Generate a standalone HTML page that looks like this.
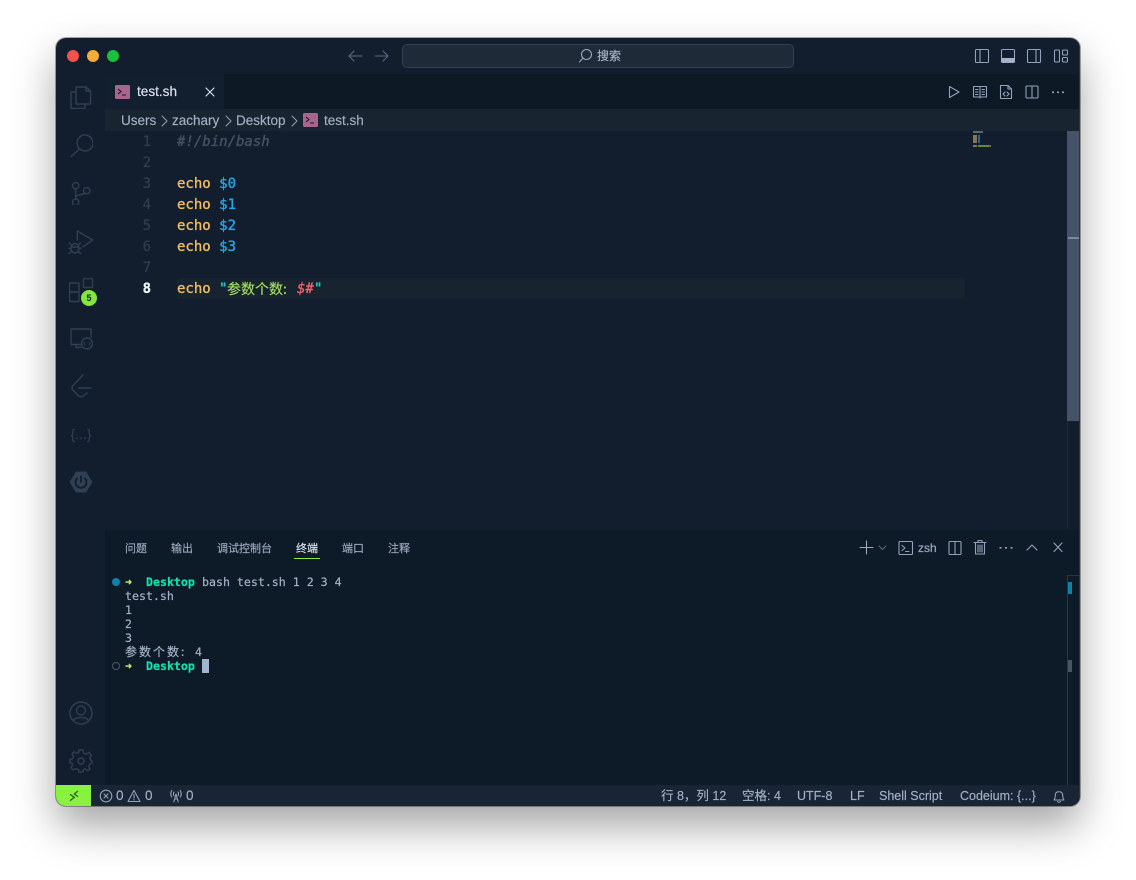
<!DOCTYPE html>
<html><head><meta charset="utf-8"><style>
html,body{margin:0;padding:0;width:1136px;height:880px;overflow:hidden;background:#fff}
*{box-sizing:border-box}
.abs,.t,svg.i{position:absolute}
#win{position:absolute;left:56px;top:38px;width:1024px;height:768px;border-radius:10px;box-shadow:0 20px 42px rgba(0,0,0,.36),0 0 0 1px rgba(90,90,90,.5);}
#clip{position:absolute;left:0;top:0;width:1136px;height:880px;clip-path:inset(38px 56px 74px 56px round 10px)}
.t{white-space:pre;line-height:1;font-family:"Liberation Sans","Noto Sans CJK SC",sans-serif;-webkit-text-stroke:.15px currentColor}
.m{font-family:"DejaVu Sans Mono","Noto Sans CJK SC",monospace}
.ln{font-size:14px;color:#2e3d4f;width:30px;text-align:right;left:121px;-webkit-text-stroke:.3px currentColor}
.code{font-size:14px;left:177px;-webkit-text-stroke:.35px currentColor}
.ui{font-size:13.5px;color:#a2b0c6}
.pt{font-size:11px;color:#9aa8bd;font-family:"Noto Sans CJK SC",sans-serif}
.tm{font-size:11.6px;color:#a3b1c6;-webkit-text-stroke:.2px currentColor}
.st{font-size:12.5px;line-height:16px;color:#a2b0c6;top:788px}
svg.i{fill:none;stroke-linecap:round;stroke-linejoin:round}
.ab{stroke:#2f3f54;stroke-width:1.4}
.ic{stroke:#92a2bb;stroke-width:1.1}
</style></head><body>
<div id="win"></div>
<div id="clip">
<div class="abs" style="left:56px;top:38px;width:1024px;height:768px;background:#121e2d"></div>
<!-- tab bar -->
<div class="abs" style="left:224px;top:74px;width:856px;height:35px;background:#0e1926"></div>
<div class="abs" style="left:105px;top:75px;width:119px;height:34px;background:#121f2e"></div>
<div class="abs" style="left:105px;top:109px;width:975px;height:22px;background:#192431"></div>
<!-- panel -->
<div class="abs" style="left:105px;top:530px;width:975px;height:255px;background:#0d1a27"></div>
<!-- status -->
<div class="abs" style="left:56px;top:785px;width:1024px;height:21px;background:#192534"></div>
<div class="abs" style="left:56px;top:785px;width:35px;height:21px;background:#89f13f"></div>
<!-- scrollbar -->
<div class="abs" style="left:1067px;top:131px;width:12px;height:290px;background:#445367"></div>
<div class="abs" style="left:1068px;top:237px;width:11px;height:2px;background:#7c899c"></div>
<div class="abs" style="left:1067px;top:421px;width:1px;height:108px;background:#1d2a3a"></div>
<div class="abs" style="left:1079px;top:38px;width:1px;height:768px;background:#2a3542"></div>
<!-- traffic -->
<div class="abs" style="left:67px;top:50px;width:12px;height:12px;border-radius:50%;background:#f4504c"></div>
<div class="abs" style="left:87px;top:50px;width:12px;height:12px;border-radius:50%;background:#f5ab37"></div>
<div class="abs" style="left:107px;top:50px;width:12px;height:12px;border-radius:50%;background:#18c13d"></div>
<!-- nav arrows -->
<svg class="i" style="left:346px;top:47px;stroke:#5a6a7f;stroke-width:1.1" width="44" height="18"><path d="M3 9H16M3 9L8 4M3 9L8 14M29 9H42M42 9L37 4M42 9L37 14"/></svg>
<!-- search -->
<div class="abs" style="left:402px;top:44px;width:392px;height:24px;border-radius:5px;background:#1e2a38;border:1px solid #334152"></div>
<svg class="i" style="left:578px;top:48px;stroke:#9aa8bd;stroke-width:1.1" width="16" height="16"><circle cx="8.5" cy="6.5" r="5"/><path d="M5 10L1.5 14"/></svg>
<div class="t" style="left:597px;top:49px;font-size:12px;color:#a7b4c8;font-family:'Noto Sans CJK SC',sans-serif;line-height:14px">搜索</div>
<!-- layout icons -->
<svg class="i ic" style="left:974px;top:48px" width="16" height="16"><rect x="1.5" y="1.5" width="13" height="13" rx="1"/><path d="M6 1.5V14.5"/></svg>
<svg class="i ic" style="left:1000px;top:48px" width="16" height="16"><rect x="1.5" y="1.5" width="13" height="13" rx="1"/><rect x="1.5" y="10" width="13" height="4.5" fill="#a2b3cc" stroke="none"/></svg>
<svg class="i ic" style="left:1026px;top:48px" width="16" height="16"><rect x="1.5" y="1.5" width="13" height="13" rx="1"/><path d="M10 1.5V14.5"/></svg>
<svg class="i ic" style="left:1053px;top:48px" width="16" height="16"><rect x="1.5" y="2" width="5" height="12" rx="1"/><rect x="9.5" y="2" width="5" height="5" rx="1"/><rect x="9.5" y="9.5" width="5" height="4.5" rx="1"/></svg>
<!-- tab -->
<svg class="abs" style="left:115px;top:85px" width="15" height="14"><rect width="15" height="14" rx="1.5" fill="#a8668f"/><path d="M3 4L6 6.5L3 9M7 10H11" stroke="#1b1320" stroke-width="1.1" fill="none"/></svg>
<div class="t" style="left:137px;top:85px;font-size:13.6px;color:#dbe3ee;line-height:14px">test.sh</div>
<svg class="i" style="left:204px;top:86px;stroke:#dfe6f0;stroke-width:1.1" width="12" height="12"><path d="M2 2L10 10M10 2L2 10"/></svg>
<!-- tab actions -->
<svg class="i ic" style="left:946px;top:84px" width="16" height="16"><path d="M3.5 2.5L13 8L3.5 13.5Z"/></svg>
<svg class="i ic" style="left:972px;top:84px" width="16" height="16"><path d="M1.5 2.5H14.5V13H1.5ZM8 2.5V14M3.5 5.5H6M3.5 8H6M3.5 10.5H6M10 5.5H12.5M10 8H12.5M10 10.5H12.5"/></svg>
<svg class="i ic" style="left:998px;top:84px" width="16" height="16"><path d="M2.5 1.5H10L13.5 5V14.5H2.5ZM10 1.5V5H13.5M7 8L5 10L7 12M9 8L11 10L9 12"/></svg>
<svg class="i ic" style="left:1024px;top:84px" width="16" height="16"><rect x="2" y="2" width="12" height="12" rx="1"/><path d="M8 2V14"/></svg>
<svg class="abs" style="left:1050px;top:84px" width="16" height="16" fill="#92a2bb"><rect x="2" y="7.5" width="2" height="1.6"/><rect x="7" y="7.5" width="2" height="1.6"/><rect x="12" y="7.5" width="2" height="1.6"/></svg>
<!-- breadcrumb -->
<div class="t ui" style="left:121px;top:113px;line-height:15px">Users</div>
<div class="t ui" style="left:172px;top:113px;line-height:15px">zachary</div>
<div class="t ui" style="left:236px;top:113px;line-height:15px">Desktop</div>
<div class="t ui" style="left:324px;top:113px;line-height:15px">test.sh</div>
<svg class="i" style="left:160px;top:113px;stroke:#93a2b8;stroke-width:1" width="140" height="15"><path d="M2 3L7 8L2 13M66 3L71 8L66 13M132 3L137 8L132 13"/></svg>
<svg class="abs" style="left:303px;top:113px" width="15" height="14"><rect width="15" height="14" rx="1.5" fill="#a8668f"/><path d="M3 4L6 6.5L3 9M7 10H11" stroke="#1b1320" stroke-width="1.1" fill="none"/></svg>
<!-- line highlight -->
<div class="abs" style="left:177px;top:278px;width:788px;height:21px;background:#17232f"></div>
<!-- line numbers -->
<div class="t m ln" style="top:135px">1</div>
<div class="t m ln" style="top:156px">2</div>
<div class="t m ln" style="top:177px">3</div>
<div class="t m ln" style="top:198px">4</div>
<div class="t m ln" style="top:219px">5</div>
<div class="t m ln" style="top:240px">6</div>
<div class="t m ln" style="top:261px">7</div>
<div class="t m ln" style="top:282px;color:#eef2f7;font-weight:bold">8</div>
<!-- code -->
<div class="t m code" style="top:135px;color:#445261;font-style:italic">#!/bin/bash</div>
<div class="t m code" style="top:177px;color:#f0bc66">echo <span style="color:#26a7ea">$0</span></div>
<div class="t m code" style="top:198px;color:#f0bc66">echo <span style="color:#26a7ea">$1</span></div>
<div class="t m code" style="top:219px;color:#f0bc66">echo <span style="color:#26a7ea">$2</span></div>
<div class="t m code" style="top:240px;color:#f0bc66">echo <span style="color:#26a7ea">$3</span></div>
<div class="t m code" style="top:282px;color:#f0bc66">echo</div>
<div class="t m code" style="top:282px;left:219px;color:#13d3c0">"</div>
<div class="t" style="left:227px;top:281px;font-size:14px;line-height:16px;color:#a5dd68;font-family:'Noto Sans CJK SC',sans-serif">参数个数:</div>
<div class="t m code" style="top:282px;left:297px;color:#f2636f;font-style:italic">$#</div>
<div class="t m code" style="top:282px;left:314px;color:#13d3c0">"</div>
<!-- minimap -->
<div class="abs" style="left:973px;top:131px;width:10px;height:1.5px;background:#5b6675"></div>
<div class="abs" style="left:973px;top:135px;width:4px;height:8px;background:#8f7545"></div>
<div class="abs" style="left:978px;top:135px;width:2px;height:8px;background:#1c6a99"></div>
<div class="abs" style="left:973px;top:145px;width:4px;height:1.5px;background:#8f7545"></div>
<div class="abs" style="left:978px;top:145px;width:11px;height:1.5px;background:#5f8a45"></div>
<div class="abs" style="left:989px;top:145px;width:2px;height:1.5px;background:#a04a55"></div>
<!-- activity icons -->
<svg class="i ab" style="left:69px;top:85px" width="24" height="24"><path d="M7 2H17L21.500 6V19H7ZM17 2V6H21.500M7 7H2V23.500H16V19"/></svg>
<svg class="i ab" style="left:69px;top:133px" width="24" height="24"><circle cx="16" cy="10" r="8"/><path d="M10.500 16L2 23.500"/></svg>
<svg class="i ab" style="left:69px;top:181px" width="24" height="24"><circle cx="6.700" cy="4.700" r="3.200"/><circle cx="6.700" cy="21.300" r="3.200"/><circle cx="17.700" cy="9.700" r="3.200"/><path d="M6.700 8V18M6.700 16C8 13 14 14.500 15.300 12"/></svg>
<svg class="i ab" style="left:68px;top:229px" width="26" height="26"><path d="M9.300 11V2L24.700 11L15 17.700"/><ellipse cx="7" cy="19.300" rx="4" ry="4.700"/><path d="M1 14L3.500 16M1 19.300H3M1 24.500L3.500 22.500M12.500 14L10.500 16M13 19.300H11M12.500 24.500L10.500 22.500M3.500 18H10.500"/></svg>
<svg class="i ab" style="left:69px;top:278px" width="26" height="26"><rect x="0.500" y="5" width="9.500" height="9" rx=".5"/><rect x="0.500" y="14" width="9.500" height="9.500" rx=".5"/><rect x="14.500" y="0.500" width="9" height="9" rx="1"/></svg>
<div class="abs" style="left:81px;top:290px;width:16px;height:16px;border-radius:50%;background:#82e63f;color:#14212a;font:bold 9px/16px 'Liberation Sans',sans-serif;text-align:center">5</div>
<svg class="i ab" style="left:69px;top:327px" width="24" height="24"><path d="M12 17.500H2V2H22V10M7 20.500H12M7 17.500V20.500"/><circle cx="18" cy="16.500" r="5.500"/><path d="M16 15L14.800 16.500L16 18M20 15L21.200 16.500L20 18" stroke-width="1"/></svg>
<svg class="i ab" style="left:69px;top:374px" width="24" height="24"><path d="M14 1L3.500 12Q2.500 14 3.500 15.500L9 21.500Q12 24 15 21.500L18 19M9.500 14H22"/></svg>
<div class="t" style="left:70px;top:426px;width:22px;text-align:center;font-size:14px;color:#2f3f54;line-height:16px">{...}</div>
<svg class="abs" style="left:69px;top:470px" width="24" height="24"><path d="M7 1.500H17L23.500 12L17 22.500H7L.5 12Z" fill="#2f3f54"/><path d="M8 8.500A5.500 5.500 0 1 0 16 8.500M12 6.500V12" fill="none" stroke="#121e2d" stroke-width="1.800" stroke-linecap="round"/></svg>
<svg class="i ab" style="left:69px;top:701px" width="24" height="24"><circle cx="12" cy="12" r="11"/><circle cx="12" cy="9.500" r="4.500"/><path d="M4.500 19.500C6 15.500 18 15.500 19.500 19.500"/></svg>
<svg class="i ab" style="left:69px;top:749px" width="24" height="24"><circle cx="12" cy="12" r="3"/><path d="M10 1H14L14.700 4.200L17 5.200L19.800 3.400L22.600 6.200L20.800 9L21.800 11.300L23 12V14L20.800 15L19.800 17.200L21 20L18.800 21.600L16 20L14.500 20.500L14 23H10L9.300 20.500L7 19.600L4.200 21L2 18.800L3.600 16L2.700 14L1 13.500V10.500L3.600 9.700L4.500 7.500L3 4.800L5 2.800L7.800 4.300L9.700 3.500Z"/></svg>
<!-- panel tabs -->
<div class="t pt" style="left:125px;top:541px;line-height:14px">问题</div>
<div class="t pt" style="left:171px;top:541px;line-height:14px">输出</div>
<div class="t pt" style="left:217px;top:541px;line-height:14px">调试控制台</div>
<div class="t pt" style="left:296px;top:541px;line-height:14px;color:#dbe3ee">终端</div>
<div class="t pt" style="left:342px;top:541px;line-height:14px">端口</div>
<div class="t pt" style="left:388px;top:541px;line-height:14px">注释</div>
<div class="abs" style="left:294px;top:558px;width:26px;height:1px;background:#8fe83f"></div>
<!-- panel actions -->
<svg class="i" style="left:859px;top:540px;stroke:#9aa9bf;stroke-width:1.100" width="16" height="16"><path d="M1 7.500H14M7.500 1V14"/></svg>
<svg class="i" style="left:878px;top:540px;stroke:#5a6a7f;stroke-width:1" width="10" height="16"><path d="M1 6L4.500 9.500L8 6"/></svg>
<svg class="i ic" style="left:898px;top:540px" width="16" height="16"><rect x="1" y="1.500" width="13.500" height="13" rx="1"/><path d="M4 5.500L7 8L4 10.500M7.500 11.500H11"/></svg>
<div class="t" style="left:918px;top:542px;font-size:12px;line-height:13px;color:#93a2b8;-webkit-text-stroke:.3px currentColor">zsh</div>
<svg class="i ic" style="left:947px;top:540px" width="16" height="16"><rect x="2" y="1.500" width="12" height="13" rx="1"/><path d="M8 1.500V14.500"/></svg>
<svg class="i ic" style="left:972px;top:539px" width="16" height="17"><path d="M2 3.500H14M6 3.500V1.500H10V3.500M3.500 3.500V15H12.500V3.500M6 6V13M8 6V13M10 6V13"/></svg>
<svg class="abs" style="left:998px;top:540px" width="16" height="16" fill="#92a2bb"><rect x="1.500" y="7" width="2" height="1.600"/><rect x="7" y="7" width="2" height="1.600"/><rect x="12.500" y="7" width="2" height="1.600"/></svg>
<svg class="i ic" style="left:1024px;top:540px" width="16" height="16"><path d="M3 10L8 5L13 10"/></svg>
<svg class="i ic" style="left:1050px;top:540px" width="16" height="16"><path d="M4 3L12 11.500M12 3L4 11.500"/></svg>
<!-- terminal -->
<div class="abs" style="left:112px;top:578px;width:8px;height:8px;border-radius:50%;background:#0b83aa"></div>
<div class="abs" style="left:112px;top:662px;width:8px;height:8px;border-radius:50%;border:1px solid #4a5866"></div>
<div class="t m tm" style="left:125px;top:575px;line-height:14px"><span style="color:#c3f06c;font-weight:bold">➜</span></div>
<div class="t m tm" style="left:146px;top:575px;line-height:14px;color:#0fe4b2;font-weight:bold">Desktop</div>
<div class="t m tm" style="left:202px;top:575px;line-height:14px">bash test.sh 1 2 3 4</div>
<div class="t m tm" style="left:125px;top:589px;line-height:14px">test.sh</div>
<div class="t m tm" style="left:125px;top:603px;line-height:14px">1</div>
<div class="t m tm" style="left:125px;top:617px;line-height:14px">2</div>
<div class="t m tm" style="left:125px;top:631px;line-height:14px">3</div>
<div class="t tm" style="left:125px;top:645px;line-height:14px;font-family:'Noto Sans CJK SC',sans-serif;font-size:12px;letter-spacing:2px">参数个数:</div>
<div class="t m tm" style="left:195px;top:645px;line-height:14px">4</div>
<div class="t m tm" style="left:125px;top:659px;line-height:14px"><span style="color:#c3f06c;font-weight:bold">➜</span></div>
<div class="t m tm" style="left:146px;top:659px;line-height:14px;color:#0fe4b2;font-weight:bold">Desktop</div>
<div class="abs" style="left:202px;top:659px;width:7px;height:14px;background:#a3b3cb"></div>
<!-- terminal scrollbar -->
<div class="abs" style="left:1067px;top:575px;width:1px;height:210px;background:#2a3644"></div>
<div class="abs" style="left:1067px;top:575px;width:12px;height:1px;background:#2a3644"></div>
<div class="abs" style="left:1068px;top:582px;width:4px;height:12px;background:#0a83ab"></div>
<div class="abs" style="left:1068px;top:660px;width:4px;height:12px;background:#4b5560"></div>
<!-- status bar -->
<svg class="abs" style="left:66px;top:788px;fill:none;stroke:#1d3a10;stroke-width:1" width="16" height="16"><path d="M4 6.300L8.300 9.300L4 12.700M12 3L8.300 6L12 8.700"/></svg>
<svg class="i ic" style="left:99px;top:788px" width="14" height="15"><circle cx="7" cy="8" r="5.800"/><path d="M5 6L9 10M9 6L5 10"/></svg>
<div class="t st" style="left:116px;font-size:13.500px">0</div>
<svg class="i ic" style="left:127px;top:788px" width="14" height="15"><path d="M7 2.500L13 13.500H1ZM7 6.500V10M7 11.500V12"/></svg>
<div class="t st" style="left:145px;font-size:13.500px">0</div>
<svg class="i ic" style="left:169px;top:788px" width="14" height="15"><path d="M4.800 14L7 6L9.200 14M5.500 11H8.500M5 4C4.300 5 4.300 6.500 5 7.500M9 4C9.700 5 9.700 6.500 9 7.500M2.800 2.500C1.500 4.500 1.500 7 2.800 9M11.200 2.500C12.500 4.500 12.500 7 11.200 9"/></svg>
<div class="t st" style="left:186px;font-size:13.500px">0</div>
<div class="t st" style="left:661px">行 8，列 12</div>
<div class="t st" style="left:742px">空格: 4</div>
<div class="t st" style="left:797px">UTF-8</div>
<div class="t st" style="left:850px">LF</div>
<div class="t st" style="left:879px">Shell Script</div>
<div class="t st" style="left:960px">Codeium: {...}</div>
<svg class="i ic" style="left:1052px;top:789px" width="14" height="14"><path d="M2 11H12C10.500 9.500 11 7 10.500 5C10 2 4 2 3.500 5C3 7 3.500 9.500 2 11ZM5.500 12.500C6 13.500 8 13.500 8.500 12.500"/></svg>
</div>
</body></html>
